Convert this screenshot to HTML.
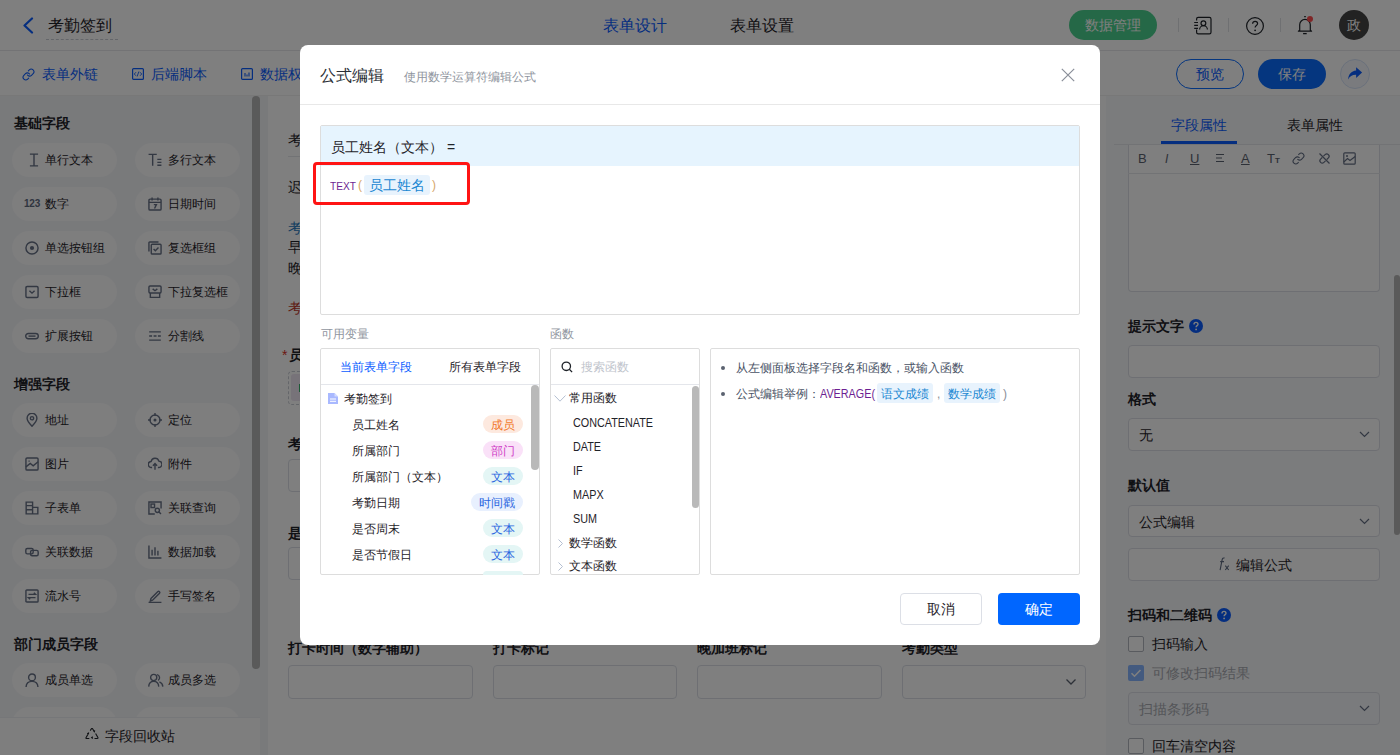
<!DOCTYPE html>
<html><head><meta charset="utf-8">
<style>
*{box-sizing:border-box;margin:0;padding:0}
html,body{width:1400px;height:755px;overflow:hidden}
body{position:relative;font-family:"Liberation Sans",sans-serif;font-size:14px;color:#1f2329;background:#fff}
.abs{position:absolute}
.t{position:absolute;white-space:nowrap;line-height:1}
/* header */
#hdr{left:0;top:0;width:1400px;height:51px;background:#fff;border-bottom:1px solid #e6e7ea}
#tb{left:0;top:50px;width:1400px;height:46px;background:transparent}
#lp{left:0;top:96px;width:268px;height:659px;background:#f3f4f7}
#cv{left:268px;top:96px;width:838px;height:659px;background:#fff}
#rp{left:1106px;top:96px;width:294px;height:659px;background:#f7f8fa}
.sect{font-weight:bold;font-size:14px;color:#1f2329}
.chip{position:absolute;width:105px;height:34px;border-radius:17px;background:#fcfcfd}
.chip .ic{position:absolute;left:13px;top:10px;width:14px;height:14px}
.chip span{position:absolute;left:33px;top:11px;font-size:12px;line-height:12px;color:#1f2329;white-space:nowrap}
#ov{left:0;top:0;width:1400px;height:755px;background:rgba(0,0,0,.5)}
#modal{left:300px;top:45px;width:800px;height:600px;background:#fff;border-radius:8px}
</style></head><body>
<div id="hdr" class="abs">
  <svg class="abs" style="left:22px;top:17px" width="12" height="17" viewBox="0 0 12 17"><path d="M10 1.5 L2.5 8.5 L10 15.5" fill="none" stroke="#0a5cff" stroke-width="2.2" stroke-linecap="round" stroke-linejoin="round"/></svg>
  <div class="t" style="left:48px;top:18px;font-size:16px;color:#1f2329">考勤签到</div>
  <div class="abs" style="left:46px;top:39px;width:72px;border-top:1px dashed #c9cdd4"></div>
  <div class="t" style="left:603px;top:18px;font-size:16px;color:#0a5cff">表单设计</div>
  <div class="t" style="left:730px;top:18px;font-size:16px;color:#1f2329">表单设置</div>
  <div class="abs" style="left:1069px;top:10px;width:88px;height:30px;border-radius:15px;background:#4bd08e"></div>
  <div class="t" style="left:1085px;top:18px;font-size:14px;color:#fff">数据管理</div>
  <div class="abs" style="left:1178px;top:18px;width:1px;height:14px;background:#dfe1e5"></div>
  <div class="abs" style="left:1228px;top:18px;width:1px;height:14px;background:#dfe1e5"></div>
  <div class="abs" style="left:1280px;top:18px;width:1px;height:14px;background:#dfe1e5"></div>
  <svg class="abs" style="left:1193px;top:16px" width="19" height="19" viewBox="0 0 19 19"><path d="M3.6 4.5V3Q3.6 1.4 5.2 1.4H16.4Q18 1.4 18 3V16.2Q18 17.8 16.4 17.8H5.2Q3.6 17.8 3.6 16.2V13.5M1.2 6.5H5M1.2 9.3H5M1.2 12.3H5" fill="none" stroke="#1f2329" stroke-width="1.2"/><circle cx="10.4" cy="7.3" r="2.4" fill="none" stroke="#1f2329" stroke-width="1.2"/><path d="M6.6 13.6A3.9 3.9 0 0 1 14.4 13.6" fill="none" stroke="#1f2329" stroke-width="1.2"/></svg>
  <svg class="abs" style="left:1245px;top:16px" width="20" height="20" viewBox="0 0 20 20"><circle cx="10" cy="10" r="8.4" fill="none" stroke="#1f2329" stroke-width="1.2"/><path d="M7.6 7.8c0-1.5 1.1-2.5 2.5-2.5s2.5 1 2.5 2.3c0 1.9-2.5 2-2.5 4" fill="none" stroke="#1f2329" stroke-width="1.2"/><circle cx="10.1" cy="14.3" r="0.9" fill="#1f2329"/></svg>
  <svg class="abs" style="left:1296px;top:14px" width="20" height="22" viewBox="0 0 20 22"><path d="M8.2 2.7H9.8M3.7 16.2V10.7A5.3 5.3 0 0 1 14.3 10.7V16.2L15.6 17.2H2.4z" fill="none" stroke="#1f2329" stroke-width="1.2" stroke-linejoin="round"/><path d="M7.1 19.6H10.7" stroke="#1f2329" stroke-width="1.3"/><circle cx="14" cy="4.9" r="3" fill="#ff4d4f"/></svg>
  <div class="abs" style="left:1339px;top:10px;width:30px;height:30px;border-radius:15px;background:#444"></div>
  <div class="t" style="left:1347px;top:18px;font-size:14px;color:#fff">政</div>
</div>
<div id="tb" class="abs" style="border-bottom:1px solid #f0f0f0">
  <svg class="abs" style="left:22px;top:18px" width="13" height="13" viewBox="0 0 24 24"><path d="M10 13a5 5 0 0 0 7.54.54l3-3a5 5 0 0 0-7.07-7.07l-1.72 1.71M14 11a5 5 0 0 0-7.54-.54l-3 3a5 5 0 0 0 7.07 7.07l1.71-1.71" fill="none" stroke="#0a5cff" stroke-width="2" stroke-linecap="round"/></svg>
  <div class="t" style="left:42px;top:17px;font-size:14px;color:#0a5cff">表单外链</div>
  <svg class="abs" style="left:132px;top:18px" width="12" height="12" viewBox="0 0 12 12"><rect x="0.6" y="0.6" width="10.8" height="10.8" rx="1" fill="none" stroke="#0a5cff" stroke-width="1.2"/><path d="M4 4.2L2.3 6 4 7.8M8 4.2L9.7 6 8 7.8M6.9 3.5L5.1 8.5" fill="none" stroke="#0a5cff" stroke-width="0.9"/></svg>
  <div class="t" style="left:151px;top:17px;font-size:14px;color:#0a5cff">后端脚本</div>
  <svg class="abs" style="left:241px;top:18px" width="12" height="12" viewBox="0 0 12 12"><rect x="0.6" y="0.6" width="10.8" height="10.8" rx="1" fill="none" stroke="#0a5cff" stroke-width="1.2"/><path d="M4 5v3.5M6 6.5v2M8 4.5v4" stroke="#0a5cff" stroke-width="1.1"/></svg>
  <div class="t" style="left:260px;top:17px;font-size:14px;color:#0a5cff">数据权限</div>
  <div class="abs" style="left:1176px;top:9px;width:68px;height:30px;border-radius:15px;border:1px solid #0a6cff"></div>
  <div class="t" style="left:1196px;top:17px;font-size:14px;color:#0a5cff">预览</div>
  <div class="abs" style="left:1258px;top:9px;width:68px;height:30px;border-radius:15px;background:#0a6cff"></div>
  <div class="t" style="left:1278px;top:17px;font-size:14px;color:#fff">保存</div>
  <div class="abs" style="left:1340px;top:9px;width:30px;height:30px;border-radius:15px;border:1px solid #d6e2f7;background:#f4f7fd"></div>
  <svg class="abs" style="left:1346px;top:14px" width="18" height="18" viewBox="0 0 16 16"><path d="M9 2.8L14.3 7.6 9 12.4V9.6C5.6 9.5 3.4 10.8 1.9 13.8 2.1 9.2 4.8 6.1 9 5.7z" fill="#0a5cff"/></svg>
</div>
<div id="lp" class="abs">
<div class="t sect" style="left:14px;top:20px">基础字段</div>
<div class="t sect" style="left:14px;top:281px">增强字段</div>
<div class="t sect" style="left:14px;top:541px">部门成员字段</div>
<div class="chip" style="left:12px;top:47px"><svg class="ic" viewBox="0 0 12 12" style="left:15px"><path d="M2.5 1h7M2.5 11h7M6 1v10" fill="none" stroke="#667085" stroke-width="1.2"/></svg><span>单行文本</span></div>
<div class="chip" style="left:135px;top:47px"><svg class="ic" viewBox="0 0 12 12"><path d="M0.5 1.2h7M4 1.2V11M8 5.5h3.5M8 8h3.5M8 10.5h3.5" fill="none" stroke="#667085" stroke-width="1.2"/></svg><span>多行文本</span></div>
<div class="chip" style="left:12px;top:91px"><div class="ic" style="left:12px;top:12px;width:18px;font-size:10px;line-height:10px;font-weight:bold;color:#5e6a80;letter-spacing:-0.2px">123</div><span>数字</span></div>
<div class="chip" style="left:135px;top:91px"><svg class="ic" viewBox="0 0 12 12"><rect x="0.8" y="1.8" width="10.4" height="9.4" rx="1" fill="none" stroke="#667085" stroke-width="1.2"/><path d="M0.8 4.6h10.4M3.5 0.5v2.5M8.5 0.5v2.5M5 6.5h2.2L5.6 9.8" fill="none" stroke="#667085" stroke-width="1.2"/></svg><span>日期时间</span></div>
<div class="chip" style="left:12px;top:135px"><svg class="ic" viewBox="0 0 12 12"><circle cx="6" cy="6" r="5.2" fill="none" stroke="#667085" stroke-width="1.2"/><circle cx="6" cy="6" r="1.8" fill="#667085"/></svg><span>单选按钮组</span></div>
<div class="chip" style="left:135px;top:135px"><svg class="ic" viewBox="0 0 12 12"><path d="M0.8 9V1.5Q0.8 0.8 1.5 0.8H9" fill="none" stroke="#667085" stroke-width="1.2"/><rect x="2.8" y="2.8" width="8.4" height="8.4" rx="0.8" fill="none" stroke="#667085" stroke-width="1.2"/><path d="M4.8 6.8l1.5 1.5 2.7-2.8" fill="none" stroke="#667085" stroke-width="1.2"/></svg><span>复选框组</span></div>
<div class="chip" style="left:12px;top:179px"><svg class="ic" viewBox="0 0 12 12"><rect x="0.8" y="1.3" width="10.4" height="9.4" rx="1" fill="none" stroke="#667085" stroke-width="1.2"/><path d="M3.8 5l2.2 2 2.2-2" fill="none" stroke="#667085" stroke-width="1.2"/></svg><span>下拉框</span></div>
<div class="chip" style="left:135px;top:179px"><svg class="ic" viewBox="0 0 12 12"><rect x="0.8" y="0.8" width="10.4" height="6" rx="1" fill="none" stroke="#667085" stroke-width="1.2"/><path d="M2 6.8v3.8h8V6.8M4 3.3l2 1.6 2-1.6" fill="none" stroke="#667085" stroke-width="1.2"/></svg><span>下拉复选框</span></div>
<div class="chip" style="left:12px;top:223px"><svg class="ic" viewBox="0 0 12 12"><rect x="0.6" y="3.8" width="10.8" height="4.6" rx="2.3" fill="none" stroke="#667085" stroke-width="1.2"/><path d="M3 6.1h6" fill="none" stroke="#667085" stroke-width="1.2"/></svg><span>扩展按钮</span></div>
<div class="chip" style="left:135px;top:223px"><svg class="ic" viewBox="0 0 12 12"><path d="M1 2.5h10M1 6h2.5M4.8 6h2.5M8.5 6h2.5M1 9.5h10" fill="none" stroke="#667085" stroke-width="1.2"/></svg><span>分割线</span></div>
<div class="chip" style="left:12px;top:307px"><svg class="ic" viewBox="0 0 12 12"><path d="M6 11.3C3.5 8.6 1.8 6.5 1.8 4.4a4.2 4.2 0 0 1 8.4 0c0 2.1-1.7 4.2-4.2 6.9z" fill="none" stroke="#667085" stroke-width="1.2"/><circle cx="6" cy="4.5" r="1.4" fill="none" stroke="#667085" stroke-width="1.2"/></svg><span>地址</span></div>
<div class="chip" style="left:135px;top:307px"><svg class="ic" viewBox="0 0 12 12"><circle cx="6" cy="6" r="4.3" fill="none" stroke="#667085" stroke-width="1.2"/><circle cx="6" cy="6" r="1.3" fill="#667085"/><path d="M6 0v2.5M6 9.5V12M0 6h2.5M9.5 6H12" fill="none" stroke="#667085" stroke-width="1.2"/></svg><span>定位</span></div>
<div class="chip" style="left:12px;top:351px"><svg class="ic" viewBox="0 0 12 12"><rect x="0.8" y="0.8" width="10.4" height="10.4" rx="1" fill="none" stroke="#667085" stroke-width="1.2"/><path d="M0.8 8.5L4.5 5.5 7 7.5 11.2 4M3 3.5h1" fill="none" stroke="#667085" stroke-width="1.2"/></svg><span>图片</span></div>
<div class="chip" style="left:135px;top:351px"><svg class="ic" viewBox="0 0 12 12"><path d="M3.5 9H3a2.6 2.6 0 0 1-.3-5.2A3.4 3.4 0 0 1 9.3 3.5 2.7 2.7 0 0 1 9 9h-.5M6 11V5.8M4.2 7.4L6 5.6l1.8 1.8" fill="none" stroke="#667085" stroke-width="1.2"/></svg><span>附件</span></div>
<div class="chip" style="left:12px;top:395px"><svg class="ic" viewBox="0 0 12 12"><path d="M1 11V1h5.5v10zM6.5 5.5H11V11H6.5M1 4h5.5M1 7.5h5.5" fill="none" stroke="#667085" stroke-width="1.2"/></svg><span>子表单</span></div>
<div class="chip" style="left:135px;top:395px"><svg class="ic" viewBox="0 0 12 12"><path d="M11.2 6.5V0.8H0.8v10.4h5" fill="none" stroke="#667085" stroke-width="1.2"/><rect x="2.6" y="2.6" width="3" height="3" fill="none" stroke="#667085" stroke-width="1.2"/><circle cx="8" cy="8" r="1.8" fill="none" stroke="#667085" stroke-width="1.2"/><path d="M9.3 9.3l1.8 1.8" fill="none" stroke="#667085" stroke-width="1.2"/></svg><span>关联查询</span></div>
<div class="chip" style="left:12px;top:439px"><svg class="ic" viewBox="0 0 12 12"><rect x="0.7" y="3" width="6.3" height="4.6" rx="1.3" fill="none" stroke="#667085" stroke-width="1.2"/><rect x="4.8" y="4.6" width="6.5" height="4.6" rx="1.3" fill="none" stroke="#667085" stroke-width="1.2"/></svg><span>关联数据</span></div>
<div class="chip" style="left:135px;top:439px"><svg class="ic" viewBox="0 0 12 12"><path d="M0.8 0.5V11.2H11.5M3.5 4v5M6 2v7M8.5 5v4" fill="none" stroke="#667085" stroke-width="1.2"/></svg><span>数据加载</span></div>
<div class="chip" style="left:12px;top:483px"><svg class="ic" viewBox="0 0 12 12"><rect x="0.8" y="0.8" width="10.4" height="10.4" rx="0.8" fill="none" stroke="#667085" stroke-width="1.2"/><path d="M3 4.6h6L7.6 3.3M9 7.4H3l1.4 1.3" fill="none" stroke="#667085" stroke-width="1.2"/></svg><span>流水号</span></div>
<div class="chip" style="left:135px;top:483px"><svg class="ic" viewBox="0 0 12 12"><path d="M2.5 8.2L8.5 2.2a1 1 0 0 1 1.4 1.4L3.9 9.6 2 10.2zM0.5 11.5h11" fill="none" stroke="#667085" stroke-width="1.2"/></svg><span>手写签名</span></div>
<div class="chip" style="left:12px;top:567px"><svg class="ic" viewBox="0 0 12 12"><circle cx="6" cy="3.8" r="2.9" fill="none" stroke="#667085" stroke-width="1.2"/><path d="M0.9 12C1.1 8.6 3.2 7.2 6 7.2s4.9 1.4 5.1 4.8" fill="none" stroke="#667085" stroke-width="1.2"/></svg><span>成员单选</span></div>
<div class="chip" style="left:135px;top:567px"><svg class="ic" viewBox="0 0 14 12" style="width:16px;left:13px"><circle cx="5" cy="3.8" r="2.7" fill="none" stroke="#667085" stroke-width="1.2"/><path d="M0.6 11.8C0.8 8.6 2.6 7.2 5 7.2s4.2 1.4 4.4 4.6M7.8 1.3a2.7 2.7 0 0 1 1 5M10 7.6c1.7.7 2.8 2 3 4.2" fill="none" stroke="#667085" stroke-width="1.2"/></svg><span>成员多选</span></div>
<div class="chip" style="left:12px;top:611px"><svg class="ic" viewBox="0 0 12 12"><circle cx="6" cy="3.8" r="2.9" fill="none" stroke="#667085" stroke-width="1.2"/><path d="M0.9 12C1.1 8.6 3.2 7.2 6 7.2s4.9 1.4 5.1 4.8" fill="none" stroke="#667085" stroke-width="1.2"/></svg><span>部门单选</span></div>
<div class="chip" style="left:135px;top:611px"><svg class="ic" viewBox="0 0 14 12" style="width:16px;left:13px"><circle cx="5" cy="3.8" r="2.7" fill="none" stroke="#667085" stroke-width="1.2"/><path d="M0.6 11.8C0.8 8.6 2.6 7.2 5 7.2s4.2 1.4 4.4 4.6M7.8 1.3a2.7 2.7 0 0 1 1 5M10 7.6c1.7.7 2.8 2 3 4.2" fill="none" stroke="#667085" stroke-width="1.2"/></svg><span>部门多选</span></div>
<div class="abs" style="left:252px;top:0;width:8px;height:573px;border-radius:4px;background:#b4b4b4"></div>
<div class="abs" style="left:0;top:621px;width:260px;height:38px;background:#fdfdfd;border-top:1px solid #eceef2"></div>
<svg class="abs" style="left:85px;top:632px" width="14" height="13" viewBox="0 0 14 13"><path d="M5.2 2.6L6.4 0.8Q7 0 7.6 0.8L9.3 3.6M10.6 5.5l2.3 4.1q.4.9-.6.9H9.5M4.3 10.5H1.6q-1 0-.5-.9L3.4 5.6M8.5 2.8l.9.9.3-1.3M7.8 10.5l-1.1-.9 1.1-.8M2.2 5.4l1.2.3.3-1.2" fill="none" stroke="#1f2329" stroke-width="1.1"/></svg>
<div class="t" style="left:105px;top:633px;font-size:14px;color:#1f2329">字段回收站</div>
</div>
<div id="cv" class="abs">
  <div class="t" style="left:20px;top:37px;font-size:14px;color:#1f2329">考勤签到说明</div>
  <div class="abs" style="left:20px;top:60px;width:798px;height:1px;background:#e4e6eb"></div>
  <div class="t" style="left:20px;top:84px;font-size:14px;color:#1f2329">迟到规则说明</div>
  <div class="t" style="left:20px;top:125px;font-size:14px;color:#2a7ac0">考勤时间</div>
  <div class="t" style="left:20px;top:144px;font-size:14px;color:#1f2329">早上打卡</div>
  <div class="t" style="left:20px;top:165px;font-size:14px;color:#1f2329">晚上打卡</div>
  <div class="t" style="left:20px;top:205px;font-size:14px;color:#c03a2b">考勤须知</div>
  <div class="t" style="left:14px;top:252px;font-size:14px;color:#d93026">*</div>
  <div class="t" style="left:21px;top:252px;font-size:14px;font-weight:bold;color:#1f2329">员工姓名</div>
  <div class="abs" style="left:20px;top:275px;width:184px;height:34px;border:1px dashed #c9cdd4;border-radius:4px"></div>
  <div class="abs" style="left:23px;top:278px;width:178px;height:27px;border-radius:3px;background:#efe6f3"></div>
  <div class="abs" style="left:31px;top:288px;width:3px;height:8px;background:#36b36a"></div>
  <div class="t" style="left:20px;top:341px;font-size:14px;font-weight:bold;color:#1f2329">考勤日期</div>
  <div class="abs" style="left:20px;top:363px;width:184px;height:33px;border:1px solid #dcdfe6;border-radius:4px"></div>
  <div class="t" style="left:20px;top:430px;font-size:14px;font-weight:bold;color:#1f2329">是否周末</div>
  <div class="abs" style="left:20px;top:451px;width:184px;height:33px;border:1px solid #dcdfe6;border-radius:4px"></div>
  <div class="t" style="left:20px;top:545px;font-size:14px;font-weight:bold;color:#1f2329">打卡时间（数字辅助）</div>
  <div class="t" style="left:225px;top:545px;font-size:14px;font-weight:bold;color:#1f2329">打卡标记</div>
  <div class="t" style="left:429px;top:545px;font-size:14px;font-weight:bold;color:#1f2329">晚加班标记</div>
  <div class="t" style="left:634px;top:545px;font-size:14px;font-weight:bold;color:#1f2329">考勤类型</div>
  <div class="abs" style="left:20px;top:569px;width:185px;height:34px;border:1px solid #dcdfe6;border-radius:4px"></div>
  <div class="abs" style="left:225px;top:569px;width:184px;height:34px;border:1px solid #dcdfe6;border-radius:4px"></div>
  <div class="abs" style="left:429px;top:569px;width:185px;height:34px;border:1px solid #dcdfe6;border-radius:4px"></div>
  <div class="abs" style="left:634px;top:569px;width:184px;height:34px;border:1px solid #dcdfe6;border-radius:4px"></div>
  <svg class="abs" style="left:797px;top:582px" width="12" height="8" viewBox="0 0 12 8"><path d="M1.5 1.5l4.5 4.5 4.5-4.5" fill="none" stroke="#5b6270" stroke-width="1.3"/></svg>
</div>
<div id="rp" class="abs">
<div class="t" style="left:65px;top:22px;font-size:14px;color:#0a5cff">字段属性</div>
<div class="t" style="left:181px;top:22px;font-size:14px;color:#1f2329">表单属性</div>
<div class="abs" style="left:8px;top:48px;width:286px;height:1px;background:#e4e6eb"></div>
<div class="abs" style="left:55px;top:45px;width:76px;height:3px;background:#0a5cff"></div>
<div class="abs" style="left:22px;top:49px;width:252px;height:147px;border:1px solid #dcdfe6;border-top:none;border-radius:0 0 4px 4px;background:#fff"></div>
<div class="abs" style="left:22px;top:77px;width:252px;height:1px;background:#e4e6eb"></div>
<div class="t" style="left:32px;top:56px;font-size:13px;color:#5b6270">B</div>
<div class="t" style="left:59px;top:57px;font-size:12px;font-style:italic;color:#5b6270">I</div>
<div class="t" style="left:84px;top:56px;font-size:13px;color:#5b6270;text-decoration:underline">U</div>
<svg class="abs" style="left:109px;top:57px" width="10" height="10" viewBox="0 0 10 10"><path d="M1 1.5h8M1 5h6M1 8.5h8" fill="none" stroke="#5b6270" stroke-width="1"/></svg>
<div class="t" style="left:135px;top:56px;font-size:13px;color:#5b6270;text-decoration:underline">A</div>
<div class="t" style="left:161px;top:56px;font-size:13px;color:#5b6270">T<span style="font-size:8px;font-weight:bold">T</span></div>
<svg class="abs" style="left:186px;top:56px" width="13" height="13" viewBox="0 0 24 24"><path d="M10 13a5 5 0 0 0 7.54.54l3-3a5 5 0 0 0-7.07-7.07l-1.72 1.71M14 11a5 5 0 0 0-7.54-.54l-3 3a5 5 0 0 0 7.07 7.07l1.71-1.71" fill="none" stroke="#5e6a80" stroke-width="2"/></svg>
<svg class="abs" style="left:212px;top:56px" width="13" height="13" viewBox="0 0 13 13"><path d="M5.5 4.2l1.6-1.6a2.3 2.3 0 0 1 3.3 3.3L8.8 7.5M7.5 8.8L5.9 10.4a2.3 2.3 0 0 1-3.3-3.3L4.2 5.5M1.5 1.5l10 10" fill="none" stroke="#667085" stroke-width="1.2"/></svg>
<svg class="abs" style="left:237px;top:56px" width="13" height="13" viewBox="0 0 13 13"><rect x="0.8" y="0.8" width="11.4" height="11.4" rx="1" fill="none" stroke="#667085" stroke-width="1.2"/><path d="M0.8 10L4.5 6.5 7 8.5 12.2 4.5" fill="none" stroke="#667085" stroke-width="1.2"/><circle cx="4" cy="4" r="1" fill="#667085"/></svg>
<div class="t" style="left:22px;top:223px;font-size:14px;font-weight:bold;color:#1f2329">提示文字</div>
<svg class="abs" style="left:83px;top:223px" width="14" height="14" viewBox="0 0 14 14"><circle cx="7" cy="7" r="7" fill="#0a5cff"/><path d="M5 5.4c0-1.2.9-2 2-2s2 .8 2 1.8c0 1.4-1.9 1.5-1.9 3" fill="none" stroke="#fff" stroke-width="1.4"/><circle cx="7.1" cy="10.4" r="0.9" fill="#fff"/></svg>
<div class="abs" style="left:22px;top:249px;width:252px;height:33px;border:1px solid #dcdfe6;border-radius:4px;background:#fff"></div>
<div class="t" style="left:22px;top:296px;font-size:14px;font-weight:bold;color:#1f2329">格式</div>
<div class="abs" style="left:22px;top:322px;width:252px;height:33px;border:1px solid #dcdfe6;border-radius:4px;background:#fff"></div><div class="t" style="left:33px;top:332px;font-size:14px;color:#1f2329">无</div><svg class="abs" style="left:253px;top:335px" width="11" height="7" viewBox="0 0 11 7"><path d="M1 1l4.5 4.5L10 1" fill="none" stroke="#667085" stroke-width="1.2"/></svg>
<div class="t" style="left:22px;top:382px;font-size:14px;font-weight:bold;color:#1f2329">默认值</div>
<div class="abs" style="left:22px;top:409px;width:252px;height:32px;border:1px solid #dcdfe6;border-radius:4px;background:#fff"></div><div class="t" style="left:33px;top:419px;font-size:14px;color:#1f2329">公式编辑</div><svg class="abs" style="left:253px;top:422px" width="11" height="7" viewBox="0 0 11 7"><path d="M1 1l4.5 4.5L10 1" fill="none" stroke="#667085" stroke-width="1.2"/></svg>
<div class="abs" style="left:22px;top:452px;width:252px;height:33px;border:1px solid #dcdfe6;border-radius:4px;background:#fff"></div>
<svg class="abs" style="left:111px;top:461px" width="14" height="14" viewBox="0 0 14 14"><path d="M7.6 1.1C6.2 0.6 5.4 1.3 5.1 2.8L3.1 13.2M3.2 4.6h3.8" fill="none" stroke="#5e6a80" stroke-width="1.1"/><path d="M8.3 8.6l3.4 4.4M11.7 8.6l-3.4 4.4" fill="none" stroke="#5e6a80" stroke-width="1.1"/></svg>
<div class="t" style="left:130px;top:462px;font-size:14px;color:#1f2329">编辑公式</div>
<div class="t" style="left:22px;top:512px;font-size:14px;font-weight:bold;color:#1f2329">扫码和二维码</div>
<svg class="abs" style="left:111px;top:512px" width="14" height="14" viewBox="0 0 14 14"><circle cx="7" cy="7" r="7" fill="#0a5cff"/><path d="M5 5.4c0-1.2.9-2 2-2s2 .8 2 1.8c0 1.4-1.9 1.5-1.9 3" fill="none" stroke="#fff" stroke-width="1.4"/><circle cx="7.1" cy="10.4" r="0.9" fill="#fff"/></svg>
<div class="abs" style="left:22px;top:540px;width:16px;height:16px;border-radius:2px;border:1px solid #b3b7bf;background:#fff"></div>
<div class="t" style="left:46px;top:541px;font-size:14px;color:#1f2329">扫码输入</div>
<div class="abs" style="left:22px;top:569px;width:16px;height:16px;border-radius:2px;background:#86b4ff"></div><svg class="abs" style="left:22px;top:569px" width="16" height="16" viewBox="0 0 16 16"><path d="M3.5 8.2l3 3 6-6.2" fill="none" stroke="#fff" stroke-width="1.6"/></svg>
<div class="t" style="left:46px;top:570px;font-size:14px;color:#a8abb2">可修改扫码结果</div>
<div class="abs" style="left:22px;top:596px;width:252px;height:33px;border:1px solid #dcdfe6;border-radius:4px;background:#f5f7fa"></div><div class="t" style="left:33px;top:606px;font-size:14px;color:#a8abb2">扫描条形码</div><svg class="abs" style="left:253px;top:609px" width="11" height="7" viewBox="0 0 11 7"><path d="M1 1l4.5 4.5L10 1" fill="none" stroke="#667085" stroke-width="1.2"/></svg>
<div class="abs" style="left:22px;top:642px;width:16px;height:16px;border-radius:2px;border:1px solid #b3b7bf;background:#fff"></div>
<div class="t" style="left:46px;top:643px;font-size:14px;color:#1f2329">回车清空内容</div>
<div class="abs" style="left:288px;top:179px;width:6px;height:260px;border-radius:3px;background:#b4b4b4"></div>
</div>
<div id="ov" class="abs"></div>
<div id="modal" class="abs">
<div class="t" style="left:20px;top:23px;font-size:16px;color:#2b2f36;">公式编辑</div>
<div class="t" style="left:104px;top:26px;font-size:12px;color:#8f959e;">使用数学运算符编辑公式</div>
<svg class="abs" style="left:761px;top:23px" width="14" height="14" viewBox="0 0 14 14"><path d="M0.8 0.8l12.4 12.4M13.2 0.8L0.8 13.2" stroke="#8a8f99" stroke-width="1.2"/></svg>
<div class="abs" style="left:0px;top:59px;width:800px;height:1px;background:#e8e8e8"></div>
<div class="abs" style="left:20px;top:80px;width:760px;height:190px;border:1px solid #dddddd;border-radius:2px;background:#fff"></div>
<div class="abs" style="left:21px;top:81px;width:758px;height:40px;background:#e6f4fe"></div>
<div class="t" style="left:31px;top:95px;font-size:14px;color:#1f2329;">员工姓名（文本） =</div>
<div class="abs" style="left:13px;top:117px;width:157px;height:43px;border:3px solid #ff1414;border-radius:4px"></div>
<div class="t" style="left:30px;top:136px;font-size:11px;color:#6d1f92;transform:scaleX(0.92);transform-origin:0 0">TEXT</div>
<div class="t" style="left:58px;top:134px;font-size:12px;color:#d6a76a;">(</div>
<div class="abs" style="left:64px;top:130px;width:66px;height:20px;background:#e8f3fd;border-radius:3px"></div>
<div class="t" style="left:69px;top:133px;font-size:14px;color:#1a87d2;">员工姓名</div>
<div class="t" style="left:132px;top:134px;font-size:12px;color:#d6a76a;">)</div>
<div class="t" style="left:21px;top:283px;font-size:12px;color:#8f959e;">可用变量</div>
<div class="t" style="left:250px;top:283px;font-size:12px;color:#8f959e;">函数</div>
<div class="abs" style="left:20px;top:303px;width:220px;height:227px;border:1px solid #dddddd;border-radius:2px;background:#fff"></div>
<div class="abs" style="left:21px;top:339px;width:218px;height:1px;background:#e4e6eb"></div>
<div class="t" style="left:40px;top:316px;font-size:12px;color:#0a5cff;">当前表单字段</div>
<div class="t" style="left:149px;top:316px;font-size:12px;color:#1f2329;">所有表单字段</div>
<svg class="abs" style="left:28px;top:348px" width="10" height="11" viewBox="0 0 10 11"><path d="M0 0h6.5L10 3.5V11H0z" fill="#a9b9ff"/><path d="M2 6h6M2 8.3h6" stroke="#fff" stroke-width="1"/><path d="M6.5 0v3.5H10" fill="#d4dcff"/></svg>
<div class="t" style="left:44px;top:348px;font-size:12px;color:#1f2329;">考勤签到</div>
<div class="t" style="left:52px;top:374px;font-size:12px;color:#1f2329;">员工姓名</div>
<div class="abs" style="left:183px;top:370px;width:40px;height:18px;background:#fde9df;border-radius:9px"></div>
<div class="t" style="left:183px;top:374px;font-size:12px;color:#f2782a;width:40px;text-align:center">成员</div>
<div class="t" style="left:52px;top:400px;font-size:12px;color:#1f2329;">所属部门</div>
<div class="abs" style="left:183px;top:396px;width:40px;height:18px;background:#fae1f8;border-radius:9px"></div>
<div class="t" style="left:183px;top:400px;font-size:12px;color:#cf3cc6;width:40px;text-align:center">部门</div>
<div class="t" style="left:52px;top:426px;font-size:12px;color:#1f2329;">所属部门（文本）</div>
<div class="abs" style="left:183px;top:422px;width:40px;height:18px;background:#e4f6f5;border-radius:9px"></div>
<div class="t" style="left:183px;top:426px;font-size:12px;color:#2a66e0;width:40px;text-align:center">文本</div>
<div class="t" style="left:52px;top:452px;font-size:12px;color:#1f2329;">考勤日期</div>
<div class="abs" style="left:171px;top:448px;width:52px;height:18px;background:#e8f0fe;border-radius:9px"></div>
<div class="t" style="left:171px;top:452px;font-size:12px;color:#2a66e0;width:52px;text-align:center">时间戳</div>
<div class="t" style="left:52px;top:478px;font-size:12px;color:#1f2329;">是否周末</div>
<div class="abs" style="left:183px;top:474px;width:40px;height:18px;background:#e4f6f5;border-radius:9px"></div>
<div class="t" style="left:183px;top:478px;font-size:12px;color:#2a66e0;width:40px;text-align:center">文本</div>
<div class="t" style="left:52px;top:504px;font-size:12px;color:#1f2329;">是否节假日</div>
<div class="abs" style="left:183px;top:500px;width:40px;height:18px;background:#e4f6f5;border-radius:9px"></div>
<div class="t" style="left:183px;top:504px;font-size:12px;color:#2a66e0;width:40px;text-align:center">文本</div>
<div class="abs" style="left:183px;top:526px;width:40px;height:4px;background:#e4f6f5;border-radius:9px 9px 0 0"></div>
<div class="abs" style="left:231px;top:340px;width:8px;height:85px;background:#b9b9b9;border-radius:4px"></div>
<div class="abs" style="left:250px;top:303px;width:150px;height:227px;border:1px solid #dddddd;border-radius:2px;background:#fff"></div>
<div class="abs" style="left:251px;top:339px;width:148px;height:1px;background:#e4e6eb"></div>
<svg class="abs" style="left:261px;top:316px" width="12" height="12" viewBox="0 0 12 12"><circle cx="5.3" cy="5.3" r="4.2" fill="none" stroke="#1f2329" stroke-width="1.3"/><path d="M8.3 8.3l2.8 2.8" stroke="#1f2329" stroke-width="1.3"/></svg>
<div class="t" style="left:281px;top:316px;font-size:12px;color:#c0c4cc;">搜索函数</div>
<svg class="abs" style="left:254px;top:350px" width="12" height="7" viewBox="0 0 12 7"><path d="M0.5 0.5L6 6.2 11.5 0.5" fill="none" stroke="#b4bfd2" stroke-width="1"/></svg>
<div class="t" style="left:269px;top:347px;font-size:12px;color:#1f2329;">常用函数</div>
<div class="t" style="left:273px;top:372px;font-size:12px;color:#1f2329;transform:scaleX(0.9);transform-origin:0 0">CONCATENATE</div>
<div class="t" style="left:273px;top:396px;font-size:12px;color:#1f2329;transform:scaleX(0.9);transform-origin:0 0">DATE</div>
<div class="t" style="left:273px;top:420px;font-size:12px;color:#1f2329;transform:scaleX(0.9);transform-origin:0 0">IF</div>
<div class="t" style="left:273px;top:444px;font-size:12px;color:#1f2329;transform:scaleX(0.9);transform-origin:0 0">MAPX</div>
<div class="t" style="left:273px;top:468px;font-size:12px;color:#1f2329;transform:scaleX(0.9);transform-origin:0 0">SUM</div>
<svg class="abs" style="left:258px;top:494px" width="5" height="9" viewBox="0 0 5 9"><path d="M0.5 0.5L4.5 4.5 0.5 8.5" fill="none" stroke="#b4bfd2" stroke-width="1"/></svg>
<div class="t" style="left:269px;top:492px;font-size:12px;color:#1f2329;">数学函数</div>
<svg class="abs" style="left:258px;top:517px" width="5" height="9" viewBox="0 0 5 9"><path d="M0.5 0.5L4.5 4.5 0.5 8.5" fill="none" stroke="#b4bfd2" stroke-width="1"/></svg>
<div class="t" style="left:269px;top:515px;font-size:12px;color:#1f2329;">文本函数</div>
<div class="abs" style="left:392px;top:341px;width:7px;height:122px;background:#b9b9b9;border-radius:4px"></div>
<div class="abs" style="left:410px;top:303px;width:370px;height:227px;border:1px solid #dddddd;border-radius:2px;background:#fff"></div>
<div class="abs" style="left:421px;top:321px;width:4px;height:4px;background:#5b6270;border-radius:2px"></div>
<div class="t" style="left:436px;top:317px;font-size:12px;color:#4a5366;">从左侧面板选择字段名和函数，或输入函数</div>
<div class="abs" style="left:421px;top:347px;width:4px;height:4px;background:#5b6270;border-radius:2px"></div>
<div class="t" style="left:436px;top:343px;font-size:12px;color:#4a5366;">公式编辑举例：</div>
<div class="t" style="left:520px;top:343px;font-size:12px;color:#6d1f92;transform:scaleX(0.9);transform-origin:0 0">AVERAGE(</div>
<div class="abs" style="left:577px;top:338px;width:56px;height:20px;background:#e8f3fd;border-radius:3px"></div>
<div class="t" style="left:581px;top:343px;font-size:12px;color:#1a87d2;">语文成绩</div>
<div class="t" style="left:637px;top:343px;font-size:12px;color:#8a8f99;">,</div>
<div class="abs" style="left:644px;top:338px;width:56px;height:20px;background:#e8f3fd;border-radius:3px"></div>
<div class="t" style="left:648px;top:343px;font-size:12px;color:#1a87d2;">数学成绩</div>
<div class="t" style="left:703px;top:343px;font-size:12px;color:#8a8f99;">)</div>
<div class="abs" style="left:600px;top:548px;width:82px;height:32px;border:1px solid #dcdfe6;border-radius:4px;background:#fff"></div>
<div class="t" style="left:627px;top:557px;font-size:14px;color:#1f2329;">取消</div>
<div class="abs" style="left:698px;top:548px;width:82px;height:32px;border-radius:4px;background:#0066ff"></div>
<div class="t" style="left:725px;top:557px;font-size:14px;color:#fff;font-weight:500">确定</div>
</div>
</body></html>
